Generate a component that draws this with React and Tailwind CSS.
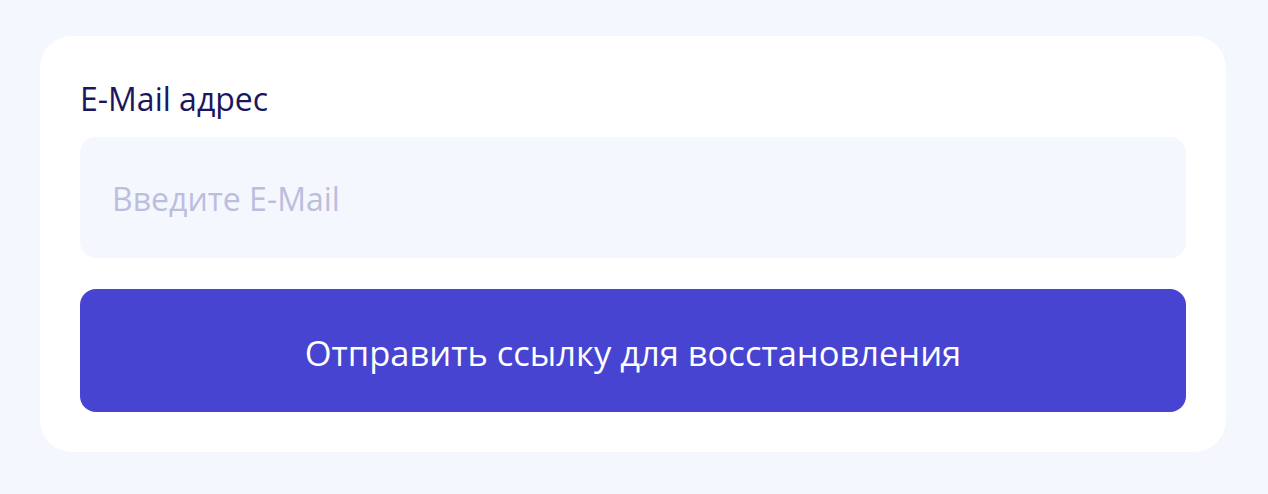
import { useState } from 'react';

const App = () => {
  const [email, setEmail] = useState('');

  return (
    <div className="min-h-screen bg-[#f4f7fe] pl-10 pr-[42px] pt-9 pb-10 font-['Open_Sans',sans-serif]">
      <form
        onSubmit={(e) => e.preventDefault()}
        className="flex flex-col rounded-[32px] bg-white p-10"
      >
        <label className="mb-[15px] text-[32px] leading-[46px] text-[#1c1660]">E-Mail адрес</label>
        <input
          type="email"
          value={email}
          onChange={(e) => setEmail(e.target.value)}
          placeholder="Введите E-Mail"
          className="h-[121px] rounded-2xl bg-[#f4f7fe] px-8 pt-0.5 text-[32px] text-[#1c1660] outline-none placeholder:text-[#bcbedd]"
        />
        <button
          type="submit"
          className="mt-[31px] h-[123px] rounded-2xl bg-[#4744d2] pt-1 text-[34.5px] text-white"
        >
          Отправить ссылку для восстановления
        </button>
      </form>
    </div>
  );
};
export default App;
